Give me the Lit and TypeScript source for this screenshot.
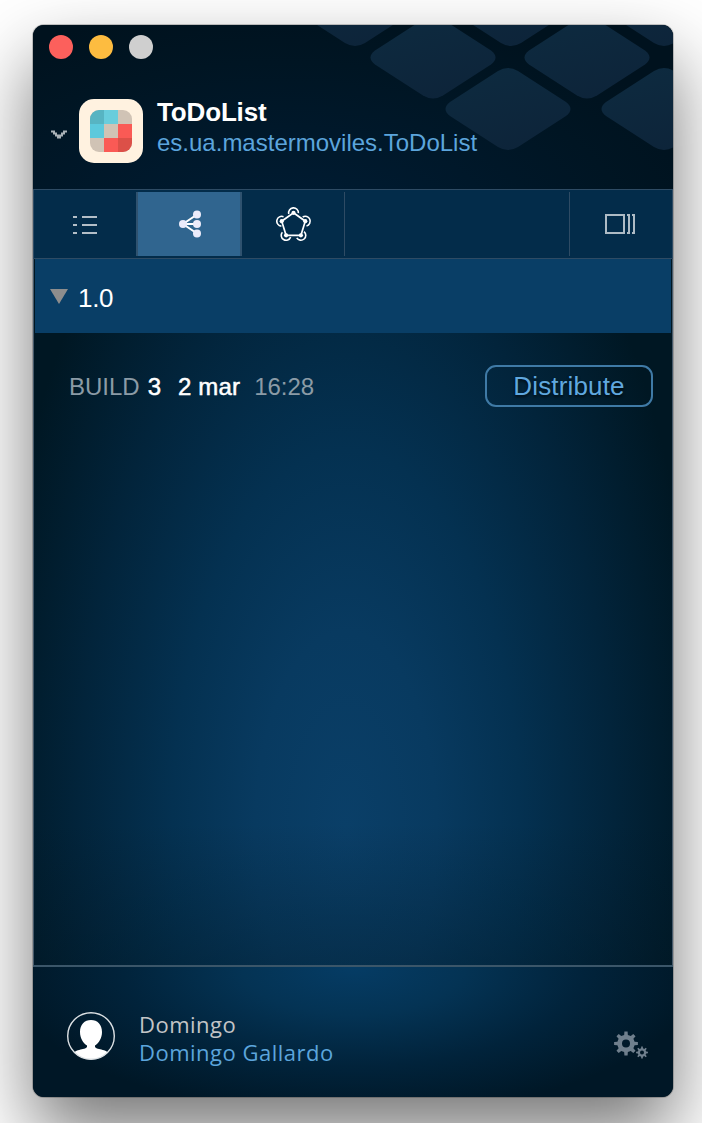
import { LitElement, html, css, svg } from "lit";
import { customElement } from "lit/decorators.js";

const polar = (cx: number, cy: number, r: number, deg: number) => {
  const a = (deg * Math.PI) / 180;
  return `${(cx + r * Math.cos(a)).toFixed(2)} ${(cy + r * Math.sin(a)).toFixed(2)}`;
};

/** Outline of a gear with a round hole, to be filled with the even-odd rule. */
function gear(cx: number, cy: number, outer: number, inner: number, hole: number, teeth = 8) {
  const step = 360 / teeth;
  let d = "";
  for (let i = 0; i < teeth; i++) {
    const a = i * step - 90;
    d += `${i ? "L" : "M"}${polar(cx, cy, inner, a - step * 0.27)}`;
    d += `L${polar(cx, cy, outer, a - step * 0.17)}L${polar(cx, cy, outer, a + step * 0.17)}`;
    d += `L${polar(cx, cy, inner, a + step * 0.27)}`;
  }
  return `${d}Z M${cx - hole} ${cy}a${hole} ${hole} 0 1 0 ${2 * hole} 0a${hole} ${hole} 0 1 0 ${-2 * hole} 0Z`;
}

const TILE = "M-58 -7L-10 -38Q0 -44 10 -38L58 -7Q67 0 58 7L10 38Q0 44 -10 38L-58 7Q-67 0 -58 -7Z";
const TILES = [[322, -20], [478, -20], [631, -20], [400, 32.5], [554, 32.5], [475, 84], [631, 84]];

const NODES = [[17.5, 6.8], [29.3, 15.2], [24.9, 29.3], [10.1, 29.3], [5.7, 15.2]];

@customElement("app-root")
export class AppRoot extends LitElement {
  static styles = css`
    :host {
      display: block;
      box-sizing: border-box;
      height: 1123px;
      padding: 25px 29px 26px 33px;
      overflow: hidden;
      background: #fff;
      font-family: "Liberation Sans", Arial, sans-serif;
    }
    svg { display: block; flex: none; }
    .window {
      display: flex;
      flex-direction: column;
      height: 1072px;
      border-radius: 11px;
      overflow: hidden;
      background: #00131f;
      box-shadow: 0 0 0 1px rgba(0, 0, 0, 0.2), 0 36px 74px rgba(0, 0, 0, 0.54);
    }
    .header {
      position: relative;
      height: 164px;
      background: radial-gradient(ellipse 460px 230px at 250px 210px, #001d36, #001523 75%, #00121e);
    }
    .pattern { position: absolute; inset: 0; }
    .lights { display: flex; gap: 16px; padding: 10px 16px 0; }
    .light { width: 24px; height: 24px; border-radius: 50%; }
    .red { background: #fc605c; }
    .yellow { background: #fdbc40; }
    .gray { background: #cfcfcf; }
    .app { position: relative; display: flex; align-items: flex-start; padding: 38px 0 0 18px; }
    .chevron { margin-top: 33px; }
    .icon { margin: 2px 14px 0 12px; }
    .title { font-size: 26px; line-height: 30px; font-weight: 700; letter-spacing: -0.15px; color: #fff; white-space: nowrap; }
    .bundle { font-size: 24px; line-height: 32px; color: #5ca5dc; white-space: nowrap; }
    .toolbar {
      box-sizing: border-box;
      display: flex;
      height: 70px;
      padding: 2px 0;
      border: 1px solid #2e4b64;
      background: #032c4a;
    }
    .tab { box-sizing: border-box; display: flex; align-items: center; justify-content: center; width: 102px; }
    .tab.bullets { padding-top: 2px; }
    .tab.active { width: 106px; padding-left: 2px; background: #30658f; border: solid #2f526f; border-width: 0 2px; }
    .tab.third { width: 103px; padding-left: 2px; border-right: 1px solid #2e4b64; }
    .tab.panel { margin-left: auto; width: 103px; padding-right: 2px; border-left: 1px solid #2e4b64; }
    .list {
      box-sizing: border-box;
      height: 706px;
      padding: 0 1px;
      border: solid #46596a;
      border-width: 0 1px;
      background:
        linear-gradient(transparent 80%, rgba(0, 20, 30, 0.32)),
        radial-gradient(ellipse 362px 790px at 312px 570px, #0a3f68 0%, #083a60 25%, #043151 48%, #02243b 74%, #001723 100%);
    }
    .version { display: flex; height: 74px; background: #093e66; color: #fff; font-size: 26px; line-height: 79px; letter-spacing: -0.3px; }
    .triangle { margin: 30px 10px 0 15px; }
    .build { display: flex; align-items: flex-start; padding: 32px 18px 0 34px; font-size: 24px; line-height: 42px; white-space: nowrap; }
    .build span { padding-top: 1px; }
    .muted { color: #8b9ba6; }
    .strong { color: #fff; -webkit-text-stroke: 0.5px #fff; }
    .number { margin-left: 8px; }
    .date { margin-left: 17px; letter-spacing: 0.15px; }
    .time { margin-left: 14px; }
    .distribute {
      box-sizing: border-box;
      width: 168px;
      height: 42px;
      margin-left: auto;
      border: 2px solid #3f7aa6;
      border-radius: 11px;
      color: #60a8df;
      font-size: 26px;
      line-height: 39px;
      letter-spacing: 0.15px;
      text-align: center;
      text-shadow: 0 2px 3px rgba(0, 0, 0, 0.7);
    }
    .footer {
      box-sizing: border-box;
      display: flex;
      height: 132px;
      padding-left: 34px;
      border-top: 2px solid #3b5669;
      background: radial-gradient(ellipse 350px 150px at 320px 0, #053c65 0%, #043354 32%, #01233b 66%, #001726 100%);
      font-family: "Open Sans", "Noto Sans", sans-serif;
      font-size: 22px;
      line-height: 28px;
      letter-spacing: 0.5px;
      white-space: nowrap;
    }
    .avatar { margin: 44px 24px 0 0; }
    .user { margin-top: 43px; }
    .name { color: #c3c5c7; }
    .account { color: #5ca5dc; }
    .gears { margin: 64px 25px 0 auto; }
  `;

  render() {
    return html`
      <div class="window">
        <header class="header">
          <svg class="pattern" width="640" height="164">
            <defs>
              <linearGradient id="tile" gradientUnits="userSpaceOnUse" x1="0" y1="-60" x2="40" y2="80">
                <stop offset="0" stop-color="#0d2b40" />
                <stop offset="1" stop-color="#0d2137" />
              </linearGradient>
            </defs>
            ${TILES.map(([x, y]) => svg`<path d=${TILE} transform="translate(${x} ${y})" fill="url(#tile)" />`)}
          </svg>
          <div class="lights">
            <div class="light red"></div>
            <div class="light yellow"></div>
            <div class="light gray"></div>
          </div>
          <div class="app">
            <svg class="chevron" width="16" height="9" viewBox="0 0 16 9">
              <path d="M0 0.500H4V2.500H6V4.500H10V2.500H12V0.500H16V2.500H14V4.500H12V6.500H10V8.500H6V6.500H4V4.500H2V2.500H0z" fill="#aab2b7" />
            </svg>
            <svg class="icon" width="64" height="64" viewBox="0 0 64 64">
              <clipPath id="grid"><rect x="11" y="11" width="42" height="42" rx="9" /></clipPath>
              <rect width="64" height="64" rx="15" fill="#fff2e0" />
              <g clip-path="url(#grid)">
                <rect x="11" y="11" width="42" height="42" fill="#d0c3b5" />
                <path d="M11 11h14v14H11z" fill="#57b4c2" />
                <path d="M25 11h14v14H25z" fill="#69cddc" />
                <path d="M11 25h14v14H11z" fill="#5cc9dc" />
                <path d="M39 25h14v14H39zM25 39h14v14H25z" fill="#fa5a55" />
                <path d="M39 39h14v14H39z" fill="#dc5048" />
              </g>
            </svg>
            <div>
              <div class="title">ToDoList</div>
              <div class="bundle">es.ua.mastermoviles.ToDoList</div>
            </div>
          </div>
        </header>

        <nav class="toolbar">
          <div class="tab bullets">
            <svg width="24" height="18" viewBox="0 0 24 18">
              <path d="M0 0h4v2H0zM9 0h15v2H9zM0 8h4v2H0zM9 8h15v2H9zM0 16h4v2H0zM9 16h15v2H9z" fill="#b3bec7" />
            </svg>
          </div>
          <div class="tab active">
            <svg width="22" height="28" viewBox="0 0 22 28">
              <path d="M18 4.5L4 14L18 23.5M4 14H18" fill="none" stroke="#fff" stroke-width="2" />
              <g fill="#ebebfa">
                <circle cx="4" cy="14" r="4" />
                <circle cx="18" cy="4.5" r="4" />
                <circle cx="18" cy="14" r="4" />
                <circle cx="18" cy="23.5" r="4" />
              </g>
            </svg>
          </div>
          <div class="tab third">
            <svg width="36" height="36" viewBox="0 0 36 36">
              <path d="M${NODES.map((n) => n.join(" ")).join("L")}Z" fill="none" stroke="#fff" stroke-width="1.7" />
              ${NODES.map(([x, y], i) => {
                const out = -90 + i * 72;
                return svg`
                  <circle cx=${x} cy=${y} r="2.1" fill="#fff" />
                  <path d="M${polar(x, y, 4.9, out - 104)}A4.9 4.9 0 1 1 ${polar(x, y, 4.9, out + 94)}"
                    fill="none" stroke="#fff" stroke-width="1.6" />`;
              })}
            </svg>
          </div>
          <div class="tab panel">
            <svg width="30" height="20" viewBox="0 0 30 20">
              <path d="M1 1h18v18H1z" fill="none" stroke="#aebbc5" stroke-width="2" />
              <path d="M22 0h3v20h-3v-2h1V2h-1zM27 0h3v20h-3v-2h1V2h-1z" fill="#aebbc5" />
            </svg>
          </div>
        </nav>

        <main class="list">
          <div class="version">
            <svg class="triangle" width="18" height="15"><path d="M0 0H18L9 15Z" fill="#8d8d8d" /></svg>
            <span>1.0</span>
          </div>
          <div class="build">
            <span class="muted label">BUILD</span>
            <span class="strong number">3</span>
            <span class="strong date">2 mar</span>
            <span class="muted time">16:28</span>
            <div class="distribute">Distribute</div>
          </div>
        </main>

        <footer class="footer">
          <svg class="avatar" width="48" height="50" viewBox="0 0 48 50">
            <clipPath id="face"><circle cx="24" cy="25" r="23.5" /></clipPath>
            <g clip-path="url(#face)" fill="#fff">
              <path d="M24 9C30.5 9 35 13.5 35 21C35 27 32 32 28 34.5V36C30 39.5 41 37 45 46V50H3V46C7 37 18 39.5 20 36V34.5C16 32 13 27 13 21C13 13.5 17.5 9 24 9Z" />
            </g>
            <circle cx="24" cy="25" r="23.3" fill="none" stroke="#dce1e4" stroke-width="1.4" />
          </svg>
          <div class="user">
            <div class="name">Domingo</div>
            <div class="account">Domingo Gallardo</div>
          </div>
          <svg class="gears" width="34" height="28" viewBox="0 0 34 28">
            <path d="${gear(12, 12.5, 12, 8.8, 4)} ${gear(28, 21.5, 6, 4.3, 2)}" fill="#6f7f8d" fill-rule="evenodd" />
          </svg>
        </footer>
      </div>
    `;
  }
}
